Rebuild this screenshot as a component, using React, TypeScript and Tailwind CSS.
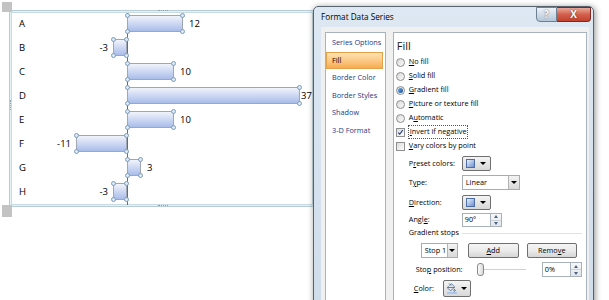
import { PaintBucket } from 'lucide-react'

type Item = { k: string; v: number; gap?: number }

const items: Item[] = [
  { k: 'A', v: 12 },
  { k: 'B', v: -3 },
  { k: 'C', v: 10 },
  { k: 'D', v: 37, gap: 1 },
  { k: 'E', v: 10 },
  { k: 'F', v: -11 },
  { k: 'G', v: 3 },
  { k: 'H', v: -3 },
]

const PX_PER_UNIT = 4.67

function Handle({ pos }: { pos: string }) {
  return <span className={`absolute w-[5px] h-[5px] rounded-full border border-[#7d9dbd] bg-[#dce9f5] ${pos}`} />
}

function Bar({ w, className = '' }: { w: number; className?: string }) {
  return (
    <div
      className={`relative h-[17px] border border-[#9ea7b3] bg-linear-to-b from-[#f1f4fb] to-[#a9bdea] ${className}`}
      style={{ width: w }}
    >
      <Handle pos="-left-[3px] -top-[3px]" />
      <Handle pos="-right-[3px] -top-[3px]" />
      <Handle pos="-left-[3px] -bottom-[3px]" />
      <Handle pos="-right-[3px] -bottom-[3px]" />
    </div>
  )
}

function Chart() {
  return (
    <div className="ml-[9px] mt-[10px] w-[306px] h-[197px] border border-[#b7cdd5] bg-[#e5f2f5] p-px">
      <div className="h-full border border-[#c8dbe1] bg-white text-[9.5px] leading-none text-black">
        {items.map((it) => {
          const w = Math.round(Math.abs(it.v) * PX_PER_UNIT)
          return (
            <div key={it.k} className="h-[24px] flex">
              <div className="w-[28px] pl-[7px] pt-[2px]">
                <div className="h-[17px] flex items-center">{it.k}</div>
              </div>
              <div className="w-[87px] pt-[2px]">
                {it.v < 0 && (
                  <div className="h-[17px] flex items-center justify-end">
                    <span className="mr-[5px]">{it.v}</span>
                    <Bar w={w} />
                  </div>
                )}
              </div>
              <div className="flex-1 border-l border-[#6b6b6b] pt-[2px]">
                {it.v > 0 && (
                  <div className="h-[17px] flex items-center">
                    <Bar w={w} className="-ml-px" />
                    <span style={{ marginLeft: it.gap ?? 6 }}>{it.v}</span>
                  </div>
                )}
              </div>
            </div>
          )
        })}
      </div>
    </div>
  )
}

function U({ children }: { children: React.ReactNode }) {
  return <span className="underline underline-offset-[1px] decoration-[0.6px]">{children}</span>
}

function Radio({ checked = false }: { checked?: boolean }) {
  return (
    <span className="w-[9px] h-[9px] rounded-full border border-[#8d8d8d] bg-linear-to-br from-[#d9d9d9] to-[#fbfbfb] flex items-center justify-center shrink-0">
      {checked && <span className="w-[5px] h-[5px] rounded-full bg-linear-to-br from-[#6fb0ee] to-[#17498f]" />}
    </span>
  )
}

function Check({ checked = false }: { checked?: boolean }) {
  return (
    <span className="w-[9px] h-[9px] border border-[#8f8f8f] bg-linear-to-br from-[#dcdcdc] to-[#fcfcfc] flex items-center justify-center shrink-0">
      {checked && (
        <svg width="9" height="9" viewBox="0 0 9 9">
          <path d="M1.6 4.6 L3.5 6.6 L7.4 1.4" stroke="#203f78" strokeWidth="1.3" fill="none" />
        </svg>
      )}
    </span>
  )
}

function Caret() {
  return <span className="w-0 h-0 border-l-[3px] border-r-[3px] border-t-[3px] border-l-transparent border-r-transparent border-t-black" />
}

function Swatch() {
  return <span className="w-[9px] h-[9px] border border-[#4b6ea8] bg-linear-to-br from-[#eef3fb] to-[#6d8fd1]" />
}

function DropButton({ children }: { children: React.ReactNode }) {
  return (
    <div className="w-[29px] h-full rounded-[2px] border border-[#707070] bg-linear-to-b from-[#f4f4f4] to-[#d8d8d8] flex items-center justify-center gap-[5px]">
      {children}
      <Caret />
    </div>
  )
}

function Spin() {
  return (
    <div className="w-[11px] h-full flex flex-col border border-l-0 border-[#a9b1bb] bg-linear-to-b from-[#f6f7f9] to-[#e1e6ec]">
      <div className="flex-1 flex items-center justify-center border-b border-[#c9d0d8]">
        <span className="w-0 h-0 border-l-[2.5px] border-r-[2.5px] border-b-[3px] border-l-transparent border-r-transparent border-b-[#4c6381]" />
      </div>
      <div className="flex-1 flex items-center justify-center">
        <span className="w-0 h-0 border-l-[2.5px] border-r-[2.5px] border-t-[3px] border-l-transparent border-r-transparent border-t-[#4c6381]" />
      </div>
    </div>
  )
}

function PushButton({ w, children }: { w: string; children: React.ReactNode }) {
  return (
    <div className={`${w} h-full rounded-[2px] border border-[#707070] bg-linear-to-b from-[#f4f4f4] via-[#ebebeb] to-[#d6d6d6] flex items-center justify-center`}>
      {children}
    </div>
  )
}

const nav = ['Series Options', 'Fill', 'Border Color', 'Border Styles', 'Shadow', '3-D Format']

function Dialog() {
  return (
    <div className="absolute left-[313px] top-[6px] w-[281px] h-[310px] rounded-t-[5px] border border-[#56626e] bg-linear-to-b from-[#dde8f3] to-[#cfdcea] shadow-[1px_1px_6px_rgba(0,0,0,0.45)] font-['Open_Sans',sans-serif] text-black">
      {/* title bar */}
      <div className="h-[20px] flex items-start">
        <div className="pl-[7px] h-[20px] flex items-center text-[8.2px]">Format Data Series</div>
        <div className="ml-auto mr-[2px] flex">
          <div className="w-[21px] h-[15px] rounded-bl-[4px] border border-[#6d7f93] bg-linear-to-b from-[#edf2f8] to-[#b5c6d9] flex items-center justify-center text-[10px] font-bold text-white [text-shadow:0_0_1.5px_#444]">
            ?
          </div>
          <div className="w-[34px] h-[15px] rounded-br-[4px] border border-l-0 border-[#7a2a22] bg-linear-to-b from-[#e9a899] via-[#d2604c] to-[#c1412d] flex items-center justify-center text-[10px] font-bold text-white [text-shadow:0_0_1.5px_#5a150e]">
            X
          </div>
        </div>
      </div>

      {/* client area */}
      <div className="ml-[7px] mr-[4px] h-[300px] bg-[#f0f0f0] pt-[5px] pl-[4px] pr-[2px] flex text-[7.3px] leading-none">
        <div className="w-[61px] border border-[#a9b3bf] bg-white pt-[1px]">
          {nav.map((n) =>
            n === 'Fill' ? (
              <div key={n} className="h-[17.5px] mr-[2px] pl-[5px] flex items-center border border-[#e3a14a] bg-linear-to-b from-[#fde3b2] to-[#f6ad50]">
                {n}
              </div>
            ) : (
              <div key={n} className="h-[17.5px] pl-[6px] flex items-center text-[#1c3a84]">
                {n}
              </div>
            )
          )}
        </div>

        <div className="w-[195px] ml-[7px] border border-[#a9b3bf] bg-white">
          <div className="mt-[5px] h-[14px] pl-[3px] flex items-center text-[11px] text-[#1a1a1a]">Fill</div>

          <div className="mt-[3px]">
            <div className="h-[14px] pl-[2px] flex items-center gap-[4px]"><Radio /><span><U>N</U>o fill</span></div>
            <div className="h-[14px] pl-[2px] flex items-center gap-[4px]"><Radio /><span><U>S</U>olid fill</span></div>
            <div className="h-[14px] pl-[2px] flex items-center gap-[4px]"><Radio checked /><span><U>G</U>radient fill</span></div>
            <div className="h-[14px] pl-[2px] flex items-center gap-[4px]"><Radio /><span><U>P</U>icture or texture fill</span></div>
            <div className="h-[14px] pl-[2px] flex items-center gap-[4px]"><Radio /><span>A<U>u</U>tomatic</span></div>
            <div className="h-[14px] pl-[2px] flex items-center gap-[3px]">
              <Check checked />
              <span className="px-[1px] py-[2px] border border-dotted border-[#555]"><U>I</U>nvert if negative</span>
            </div>
            <div className="h-[14px] pl-[2px] flex items-center gap-[4px]"><Check /><span><U>V</U>ary colors by point</span></div>
          </div>

          <div className="mt-[3px] h-[15px] pl-[15px] flex items-center">
            <span className="w-[53px]">P<U>r</U>eset colors:</span>
            <DropButton><Swatch /></DropButton>
          </div>

          <div className="mt-[4px] h-[15px] pl-[15px] flex items-center">
            <span className="w-[53px]">T<U>y</U>pe:</span>
            <div className="w-[58px] h-full border border-[#a5acb5] bg-white flex items-center">
              <span className="pl-[3px]">Linear</span>
              <div className="ml-auto w-[11px] h-[13px] border-l border-[#b3b3b3] bg-linear-to-b from-[#f3f3f3] to-[#d9d9d9] flex items-center justify-center">
                <Caret />
              </div>
            </div>
          </div>

          <div className="mt-[5px] h-[15px] pl-[15px] flex items-center">
            <span className="w-[53px]"><U>D</U>irection:</span>
            <DropButton><Swatch /></DropButton>
          </div>

          <div className="mt-[3px] h-[14px] pl-[15px] flex items-center">
            <span className="w-[53px]">Angl<U>e</U>:</span>
            <div className="w-[29px] h-full border border-[#a9b1bb] bg-white flex items-center pl-[2px]">90°</div>
            <Spin />
          </div>

          <div className="mt-[1px] h-[10px] pl-[15px] pr-[4px] flex items-center">
            <span>Gradient stops</span>
            <span className="flex-1 ml-[3px] h-px bg-[#dde3ea]" />
          </div>

          <div className="mt-[5px] h-[15px] pl-[27px] flex items-center">
            <div className="w-[37px] h-full border border-[#a5acb5] bg-white flex items-center">
              <span className="pl-[3px]">Stop 1</span>
              <div className="ml-auto w-[10px] h-[13px] border-l border-[#b3b3b3] bg-linear-to-b from-[#f3f3f3] to-[#d9d9d9] flex items-center justify-center">
                <Caret />
              </div>
            </div>
            <div className="ml-[10px] h-full flex">
              <PushButton w="w-[51px]"><span><U>A</U>dd</span></PushButton>
            </div>
            <div className="ml-[8px] h-full flex">
              <PushButton w="w-[50px]"><span>Remo<U>v</U>e</span></PushButton>
            </div>
          </div>

          <div className="mt-[4px] h-[15px] pl-[22px] flex items-center">
            <span className="w-[61px]">Sto<U>p</U> position:</span>
            <div className="relative w-[49px] h-[13px] flex items-center">
              <span className="w-full h-px bg-[#cfd3d8]" />
              <span className="absolute left-0 top-0 w-[7px] h-[13px] rounded-[3px] border border-[#8a8a8a] bg-linear-to-r from-[#fbfbfb] to-[#dadada]" />
            </div>
            <div className="ml-[16px] w-[29px] h-full border border-[#a9b1bb] bg-white flex items-center pl-[2px]">0%</div>
            <Spin />
          </div>

          <div className="mt-[3px] h-[17px] pl-[20px] flex items-center">
            <span className="w-[29px]"><U>C</U>olor:</span>
            <div className="w-[28px] h-full rounded-[2px] border border-[#707070] bg-linear-to-b from-[#f4f4f4] to-[#d8d8d8] flex items-center justify-center gap-[4px]">
              <span className="flex flex-col items-center">
                <PaintBucket size={9} strokeWidth={2} color="#3f5f8e" />
                <span className="w-[10px] h-[2px] bg-[#a9c8ec]" />
              </span>
              <Caret />
            </div>
          </div>
        </div>
      </div>
    </div>
  )
}

export default function App() {
  return (
    <div className="relative w-[609px] h-[300px] overflow-hidden bg-white font-['Open_Sans',sans-serif]">
      <Chart />

      {/* sheet corner markers */}
      <span className="absolute left-[2px] top-[2px] w-[10px] h-[10px] bg-[#c3c3c3]" />
      <span className="absolute left-[2px] top-[205px] w-[10px] h-[12px] bg-[#c3c3c3]" />

      {/* chart frame sizing handles */}
      <span className="absolute left-[158px] top-[10px] w-[10px] border-t border-dotted border-[#8fa3ad]" />
      <span className="absolute left-[158px] top-[205px] w-[10px] border-t border-dotted border-[#8fa3ad]" />
      <span className="absolute left-[10px] top-[100px] h-[10px] border-l border-dotted border-[#8fa3ad]" />

      <Dialog />
    </div>
  )
}
